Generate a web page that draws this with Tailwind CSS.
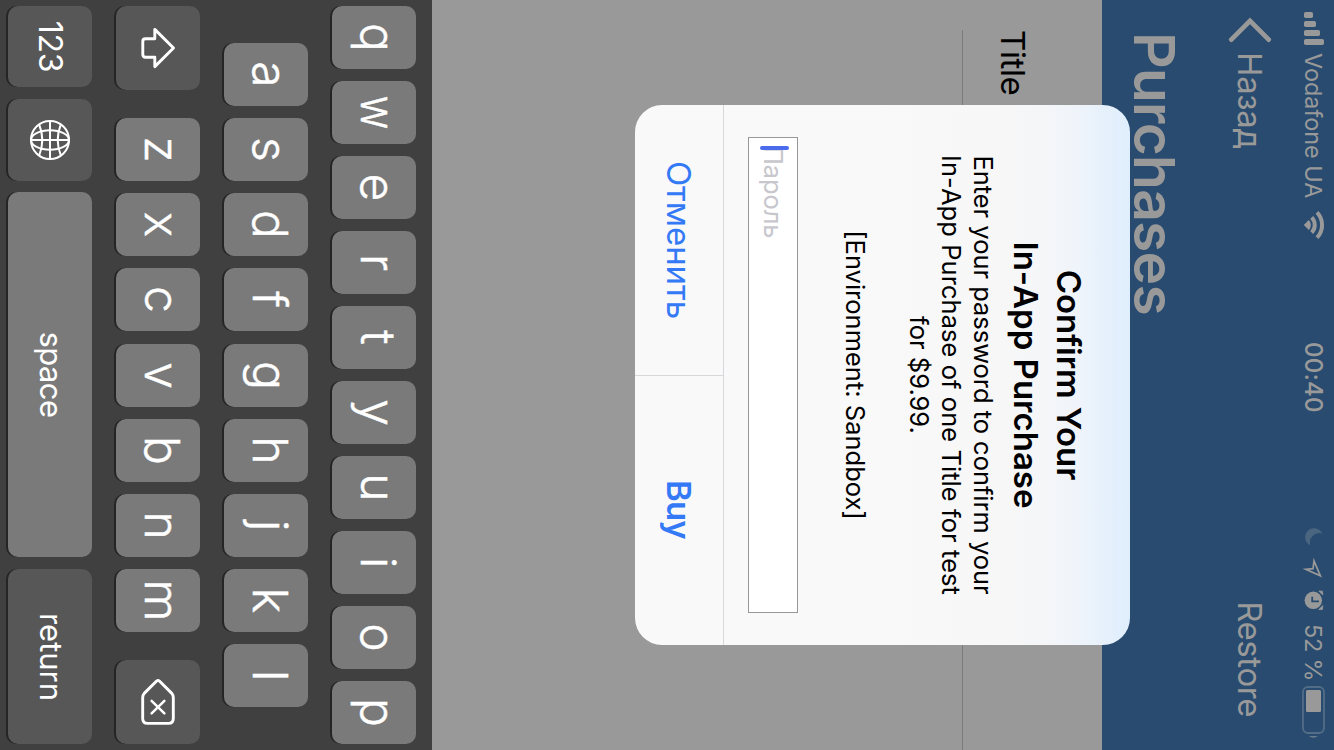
<!DOCTYPE html>
<html lang="ru">
<head>
<meta charset="utf-8">
<title>Purchases</title>
<script src="https://cdn.jsdelivr.net/npm/@tailwindcss/browser@4"></script>
</head>
<body class="relative h-[750px] w-[1334px] overflow-hidden bg-[#999999]">
<!-- Portrait phone screen, turned a quarter clockwise -->
<div class="absolute top-0 left-[1334px] flex h-[1334px] w-[750px] origin-top-left rotate-90 flex-col bg-[#999999] font-['Inter','Liberation_Sans',sans-serif] whitespace-nowrap">

  <header class="flex h-[232px] shrink-0 flex-col bg-[#284b6f] text-[#999999]">
    <!-- Status bar -->
    <div class="flex h-[41px] items-center pl-3 text-[23.5px]">
      <svg class="h-[41px] w-[33px] shrink-0" viewBox="0 0 33 41" fill="#999999"><rect x="0" y="21" width="6" height="9" rx="1.8"/><rect x="9" y="18" width="6" height="12" rx="1.8"/><rect x="18" y="14" width="6" height="16" rx="1.8"/><rect x="27" y="10" width="6" height="20" rx="1.8"/></svg>
      <span class="ml-2 w-[157px] tracking-[-0.08px]">Vodafone UA</span>
      <svg class="h-[41px] w-[30px] shrink-0" viewBox="210 0 30 41" fill="none" stroke="#999999"><path d="M225 30.2 L220 25.2 A7 7 0 0 1 230 25.2 Z" fill="#999999" stroke="none"/><path d="M217.4 22.3 A11 11 0 0 1 232.6 22.3" stroke-width="4"/><path d="M212.3 17 A18.4 18.4 0 0 1 237.7 17" stroke-width="4"/></svg>
      <span class="ml-[102px] w-[186px] text-2xl font-medium tracking-[0.25px]">00:40</span>
      <svg class="h-[41px] w-[18px] shrink-0" viewBox="528 0 18 41"><path d="M533.6 11.6 A9 9 0 1 0 545.4 23.6 A9.4 9.4 0 0 1 533.6 11.6 Z" fill="#4a6580"/></svg>
      <svg class="ml-[12px] h-[41px] w-[22px] shrink-0" viewBox="558 0 22 41"><path d="M560.8 20 L575.9 13.6 L569.3 28.3 L568.6 21 Z" fill="none" stroke="#999999" stroke-width="1.7" stroke-linejoin="miter"/></svg>
      <svg class="ml-[10px] h-[41px] w-[22px] shrink-0" viewBox="590 0 22 41"><circle cx="600.3" cy="20.7" r="8.7" fill="#999999"/><path d="M596.7 21.8 H601.3 V15" fill="none" stroke="#284b6f" stroke-width="1.8"/><path d="M591 15.2 L595 11.2 L591.2 11.6 Z M609.6 15.2 L605.6 11.2 L609.4 11.6 Z" fill="#999999" stroke="#999999" stroke-width=".8"/></svg>
      <span class="ml-[12px] w-[62px] tracking-[-0.28px]">52 %</span>
      <svg class="h-[41px] w-[54px] shrink-0" viewBox="686 0 54 41"><rect x="687" y="10" width="46" height="21" rx="5" fill="none" stroke="#526d87" stroke-width="1.8"/><rect x="690" y="13" width="22" height="15" rx="1.5" fill="#999999"/><path d="M736 16.2 A6.5 6.5 0 0 1 736 25 Z" fill="#687d8d"/></svg>
    </div>
    <!-- Navigation row -->
    <div class="flex h-[86px] items-center text-[33px]">
      <svg class="ml-4 h-[46px] w-7 shrink-0" viewBox="0 0 28 46"><path d="M23.6 4.3 L4.8 23 L23.6 41.7" fill="none" stroke="#999999" stroke-width="4.8" stroke-linecap="round" stroke-linejoin="miter"/></svg>
      <span class="ml-2 pt-0.5 tracking-[-0.35px]">Назад</span>
      <span class="mr-[33px] ml-auto pt-0.5 tracking-[-0.43px]">Restore</span>
    </div>
    <h1 class="flex h-[105px] items-center pl-8 text-[57px] font-semibold tracking-[-0.8px]">Purchases</h1>
  </header>

  <!-- List and dialog -->
  <main class="relative h-[670px] shrink-0 text-black">
    <div class="ml-[30px] flex h-[140px] items-start border-b border-[#7b7b7c] pt-[69px]">
      <span class="text-[33px] leading-10 tracking-[-0.4px]">Title</span>
    </div>

    <section class="absolute -top-7 left-[105px] flex h-[495px] w-[540px] flex-col overflow-hidden rounded-[27px] bg-[linear-gradient(to_bottom,#dfeefd_0px,#e5f0fb_22px,#eff4fa_52px,#f5f6f8_88px,#f7f7f7_130px,#f9f9f9_260px)]">
      <div class="flex h-[332px] shrink-0 flex-col pt-10 text-center">
        <h2 class="text-[33px] leading-[43px] font-semibold"><span class="tracking-[-0.08px]">Confirm Your</span><br><span>In-App Purchase</span></h2>
        <p class="mt-[5px] text-[25.5px] leading-8"><span class="tracking-[-0.03px]">Enter your password to confirm your</span><br><span class="tracking-[0.06px]">In-App Purchase of one Title for test</span><br><span>for $9.99.</span><br><br><span>[Environment: Sandbox]</span></p>
      </div>
      <div class="mx-8 flex h-[50px] w-[476px] shrink-0 items-center border border-[#98989a] bg-white pl-2">
        <div class="relative text-[25.5px] leading-[30px] tracking-[-0.1px] text-[#c7c7cd]">Пароль
          <i class="absolute -top-px left-0 h-[29px] w-1 rounded-sm bg-[#4a6bec]"></i>
        </div>
      </div>
      <div class="mt-6 flex h-[89px] border-t border-[#d8d8dc] text-[33px] text-[#347af6]">
        <button class="w-[270px] pt-0.5 tracking-[-0.15px]">Отменить</button>
        <button class="w-[270px] border-l border-[#d8d8dc] pt-0.5 pr-0.5 font-semibold tracking-[-0.8px]">Buy</button>
      </div>
    </section>
  </main>

  <!-- Keyboard -->
  <div id="keyboard" class="flex h-[432px] shrink-0 flex-col gap-6 bg-[#404040] pt-4 text-[48px] leading-none font-light text-white">
    <div class="flex gap-3 pl-[6px]" data-keys="qwertyuiop"></div>
    <div class="flex gap-3 pl-[43px]" data-keys="asdfghjkl" data-wide="g"></div>
    <div class="flex gap-7 pl-[6px]">
      <div class="flex h-[84px] w-[84px] items-center justify-center rounded-[10px] bg-[#575757] shadow-[0_2px_0_#252525]">
        <svg class="h-[84px] w-[84px]" viewBox="0 0 84 84" fill="none" stroke="#fff" stroke-width="2.9" stroke-linejoin="round"><path d="M42 26.5 L60.6 45.2 H51.2 V54.5 Q51.2 57.2 48.5 57.2 H35.5 Q32.8 57.2 32.8 54.5 V45.2 H23.4 Z"/></svg>
      </div>
      <div class="flex gap-3" data-keys="zxcvbnm" data-wide="v"></div>
      <div class="flex h-[84px] w-[84px] items-center justify-center rounded-[10px] bg-[#575757] shadow-[0_2px_0_#252525]">
        <svg class="h-[84px] w-[84px]" viewBox="0 0 84 84" fill="none" stroke="#fff" stroke-width="2.9" stroke-linejoin="round" stroke-linecap="round"><path d="M21 40.6 L33.4 28.2 Q35.3 26.7 37.5 26.7 H58.5 Q63.4 26.7 63.4 31.5 V52.5 Q63.4 57.3 58.5 57.3 H37.5 Q35.3 57.3 33.4 55.8 L21 43.4 Q19.8 42 21 40.6 Z"/><path d="M40.8 35.6 L53.4 48.4 M53.4 35.6 L40.8 48.4" stroke-width="2.5"/></svg>
      </div>
    </div>
    <div class="flex pl-[6px] font-normal">
      <div class="flex h-[84px] w-[81px] items-center justify-center rounded-[10px] bg-[#575757] text-[32px] tracking-[-0.27px] shadow-[0_2px_0_#252525]">123</div>
      <div class="ml-3 flex h-[84px] w-[82px] items-center justify-center rounded-[10px] bg-[#575757] shadow-[0_2px_0_#252525]">
        <svg class="h-[84px] w-[82px]" viewBox="0 0 82 84" fill="none" stroke="#fff" stroke-width="2"><circle cx="41" cy="42" r="19"/><ellipse cx="41" cy="42" rx="9.8" ry="19"/><path d="M41 23 V61 M22 42 H60 M25 31 Q41 37.6 57 31 M25 53 Q41 46.4 57 53"/></svg>
      </div>
      <div class="ml-[11px] flex h-[84px] w-[365px] items-center justify-center rounded-[10px] bg-[#7a7a7a] pb-[3px] text-[31px] tracking-[-0.55px] shadow-[0_2px_0_#252525]">space</div>
      <div class="ml-3 flex h-[84px] w-[175px] items-center justify-center rounded-[10px] bg-[#575757] pb-[3px] pl-px text-[31px] shadow-[0_2px_0_#252525]">return</div>
    </div>
  </div>
</div>

<template id="key"><div class="flex h-[84px] w-[63px] items-center justify-center rounded-[10px] bg-[#7a7a7a] pb-[9px] shadow-[0_2px_0_#252525]"><span class="[-webkit-text-stroke:0.5px_white]"></span></div></template>
<script>
  const template = document.getElementById('key');
  for (const row of document.querySelectorAll('[data-keys]')) {
    for (const letter of row.dataset.keys) {
      const key = template.content.firstElementChild.cloneNode(true);
      key.firstElementChild.textContent = letter;
      if (letter === row.dataset.wide) key.classList.add('ml-px');
      if (letter === 'w') key.firstElementChild.classList.add('scale-x-[0.87]');
      row.appendChild(key);
    }
  }
</script>
</body>
</html>
